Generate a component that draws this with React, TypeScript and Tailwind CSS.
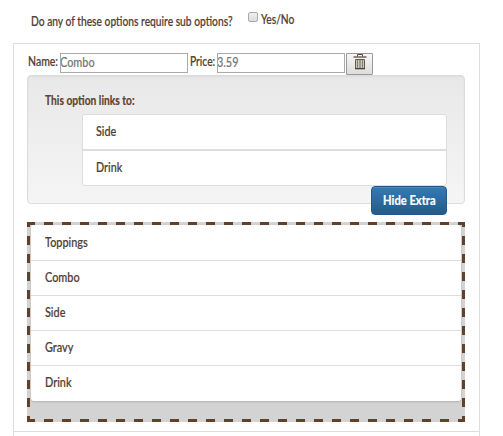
import type { ReactNode } from "react";

function DashedFrame() {
  return (
    <svg className="pointer-events-none absolute inset-0" width="438" height="200" viewBox="0 0 438 200" fill="none" stroke="#63402a" strokeWidth="3" strokeDasharray="9 9" shapeRendering="crispEdges">
      <path d="M-1 1.5H438M-1 198.5H438M1.5 -4V200M436.5 -4V200" />
    </svg>
  );
}

function TrashIcon() {
  return (
    <svg width="14" height="17" viewBox="0 0 14 17" fill="none">
      <path d="M4.5 2.5V.5h5v2" stroke="#514840" />
      <path d="M.5 3h13" stroke="#6b5747" strokeWidth="1.4" />
      <path d="M2.5 5.5h9v9h-9z" fill="#c5c4b5" stroke="#6b5a4a" />
      <path d="M4.5 6v8M9.5 6v8" stroke="#84837a" />
      <path d="M7 6v8" stroke="#6c7385" />
      <path d="M2 14.7h10" stroke="#4d3b30" strokeWidth="1.2" />
    </svg>
  );
}

function Condensed({ children, scale = "scale-x-[0.82]" }: { children: ReactNode; scale?: string }) {
  return (
    <span className={`inline-block origin-left translate-y-px whitespace-nowrap [-webkit-text-stroke:0.2px] ${scale}`}>
      {children}
    </span>
  );
}

function Field({ label, value }: { label: string; value: string }) {
  return (
    <div className="h-5 w-[128px] overflow-hidden border border-[#aaa] bg-white">
      <input aria-label={label} placeholder={value} className="-ml-px block h-[17px] w-[150px] origin-left scale-x-[0.87] bg-transparent text-[12.5px] font-medium outline-none [-webkit-text-stroke:0.15px] placeholder:text-[#777]" />
    </div>
  );
}

const linked = ["Side", "Drink"];
const categories = ["Toppings", "Combo", "Side", "Gravy", "Drink"];

export default function App() {
  return (
    <main className="h-[436px] w-[503px] overflow-hidden bg-white font-['Lato','Open_Sans',sans-serif] text-[12.5px] leading-[16px] font-medium text-[#514033]">
      <div className="flex h-[43px] pt-[9px] pl-[31px]">
        <div className="mt-1 w-[217px]">
          <Condensed>Do any of these options require sub options?</Condensed>
        </div>
        <label className="flex items-start">
          <input type="checkbox" className="mt-[3px] mr-[3px] h-[10px] w-[10px] appearance-none rounded-[2px] border border-[#aaa] bg-gradient-to-b from-[#eee] to-[#ddd]" />
          <div className="mt-[2px]"><Condensed>Yes/No</Condensed></div>
        </label>
      </div>

      <section className="ml-[13px] h-[389px] w-[467px] border border-[#ddd] px-[13px] pt-[9px]">
        <div className="flex h-[22px] items-start whitespace-nowrap">
          <div className="w-[33px] pl-px"><Condensed scale="scale-x-[0.84]">Name:</Condensed></div>
          <Field label="Name" value="Combo" />
          <div className="w-[29px] pl-[2px]"><Condensed>Price:</Condensed></div>
          <Field label="Price" value="3.59" />
          <button aria-label="Delete option" className="ml-px flex h-[22px] w-[27px] items-start justify-center rounded-[1px] border border-[#999] bg-gradient-to-b from-[#f7f7f7] to-[#ddd]">
            <TrashIcon />
          </button>
        </div>

        <div className="h-[129px] w-[438px] rounded-[4px] border border-[#dcdcdc] bg-gradient-to-b from-[#e8e8e8] to-[#f5f5f5] px-[17px] pt-[16px] shadow-[inset_0_1px_2px_rgba(0,0,0,0.05)]">
          <h2 className="h-[22px] font-bold text-[#63402a]"><Condensed>This option links to:</Condensed></h2>
          <ul className="ml-[37px] h-[72px] w-[365px] rounded-[3px] border border-[#ddd] bg-white">
            {linked.map((name) => (
              <li key={name} className="h-[36px] border-b-2 border-[#ddd] pt-[8px] pl-[13px] last:h-[34px] last:border-0"><Condensed scale="scale-x-[0.86]">{name}</Condensed></li>
            ))}
          </ul>
          <button className="ml-[326px] h-[29px] w-[76px] rounded-[4px] border border-[#24588b] bg-gradient-to-b from-[#337ab7] to-[#265a88] pb-[4px] pl-[11px] text-left text-[13px] leading-[20px] font-bold text-white shadow-[inset_0_1px_0_rgba(255,255,255,0.1)]">
            <Condensed scale="scale-x-[0.86]">Hide Extra</Condensed>
          </button>
        </div>

        <div className="relative mt-[18px] h-[200px] w-[438px] bg-[#d3d3d3] pt-[3px] pl-[4px]">
          <ul className="h-[176px] w-[430px] rounded-[3px] bg-white shadow-[0_1px_2px_rgba(0,0,0,0.15)]">
            {categories.map((name) => (
              <li key={name} className="h-[35px] border-b border-[#ddd] pt-[8px] pl-[14px] first:h-[36px] first:pt-[9px] last:border-0"><Condensed scale="scale-x-[0.87]">{name}</Condensed></li>
            ))}
          </ul>
          <DashedFrame />
        </div>
      </section>
      <div className="-mt-px ml-[13px] h-[5px] w-[467px] border border-b-0 border-[#ddd]" />
    </main>
  );
}
